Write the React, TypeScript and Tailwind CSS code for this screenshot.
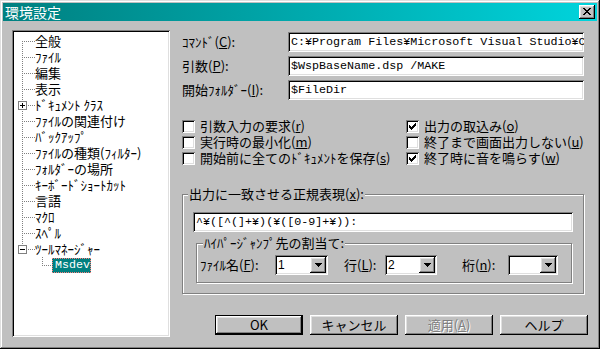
import React from 'react';

// Win98 bevels
const sunken =
  'shadow-[inset_1px_1px_0_#808080,inset_-1px_-1px_0_#ffffff,inset_2px_2px_0_#000000,inset_-2px_-2px_0_#dfdfdf]';
const raised =
  'shadow-[inset_-1px_-1px_0_#000000,inset_1px_1px_0_#ffffff,inset_-2px_-2px_0_#808080,inset_2px_2px_0_#dfdfdf]';
const etched = 'border border-[#808080] shadow-[inset_1px_1px_0_#ffffff,1px_1px_0_#ffffff]';

type Pos = 'first' | 'mid' | 'last';

const treeItems: { label: string; pos: Pos; box?: '+' | '-' }[] = [
  { label: '全般', pos: 'first' },
  { label: 'ﾌｧｲﾙ', pos: 'mid' },
  { label: '編集', pos: 'mid' },
  { label: '表示', pos: 'mid' },
  { label: 'ﾄﾞｷｭﾒﾝﾄ ｸﾗｽ', pos: 'mid', box: '+' },
  { label: 'ﾌｧｲﾙの関連付け', pos: 'mid' },
  { label: 'ﾊﾞｯｸｱｯﾌﾟ', pos: 'mid' },
  { label: 'ﾌｧｲﾙの種類(ﾌｨﾙﾀｰ)', pos: 'mid' },
  { label: 'ﾌｫﾙﾀﾞｰの場所', pos: 'mid' },
  { label: 'ｷｰﾎﾞｰﾄﾞｼｮｰﾄｶｯﾄ', pos: 'mid' },
  { label: '言語', pos: 'mid' },
  { label: 'ﾏｸﾛ', pos: 'mid' },
  { label: 'ｽﾍﾟﾙ', pos: 'mid' },
  { label: 'ﾂｰﾙﾏﾈｰｼﾞｬｰ', pos: 'last', box: '-' },
];

const dotsV = (x: number, y0: number, y1: number, skip?: [number, number]) => {
  const r = [];
  for (let y = y0; y < y1; y += 2) {
    if (skip && y >= skip[0] && y <= skip[1]) continue;
    r.push(<rect key={`v${x}-${y}`} x={x} y={y} width={1} height={1} />);
  }
  return r;
};

const dotsH = (y: number, x0: number, x1: number) => {
  const r = [];
  for (let x = x0; x < x1; x += 2) r.push(<rect key={`h${y}-${x}`} x={x} y={y} width={1} height={1} />);
  return r;
};

const Gutter = ({ pos, box }: { pos: Pos; box?: '+' | '-' }) => {
  const skip: [number, number] | undefined = box ? [4, 12] : undefined;
  const v = pos === 'first' ? dotsV(8, 8, 16, skip) : pos === 'last' ? dotsV(8, 0, 9, skip) : dotsV(8, 0, 16, skip);
  return (
    <svg width="21" height="16" className="shrink-0" shapeRendering="crispEdges">
      <g fill="#808080">
        {v}
        {dotsH(8, box ? 14 : 10, 21)}
      </g>
      {box && (
        <>
          <rect x="4.5" y="4.5" width="8" height="8" fill="#ffffff" stroke="#808080" />
          <rect x="6" y="8" width="5" height="1" fill="#000000" />
          {box === '+' && <rect x="8" y="6" width="1" height="5" fill="#000000" />}
        </>
      )}
    </svg>
  );
};

// mnemonic underline, kept to the line box
const U = ({ children }: { children: React.ReactNode }) => (
  <u className="inline-block leading-[14px]">{children}</u>
);

const Field = ({ value, className = '' }: { value: string; className?: string }) => (
  <div
    className={`${sunken} bg-white h-[20px] flex items-center pl-[3px] pr-[2px] overflow-hidden whitespace-nowrap font-['Liberation_Mono',monospace] text-[11.7px] leading-[16px] ${className}`}
  >
    <span className="shrink-0">{value}</span>
  </div>
);

const CheckBox = ({ checked }: { checked?: boolean }) => (
  <div className={`w-[13px] h-[13px] shrink-0 bg-white ${sunken} flex items-center justify-center`}>
    {checked && (
      <svg width="7" height="7" viewBox="0 0 7 7" shapeRendering="crispEdges">
        <path
          d="M0 2h1v3H0z M1 3h1v3H1z M2 4h1v3H2z M3 3h1v3H3z M4 2h1v3H4z M5 1h1v3H5z M6 0h1v3H6z"
          fill="#000000"
        />
      </svg>
    )}
  </div>
);

const CheckRow = ({ checked, children }: { checked?: boolean; children: React.ReactNode }) => (
  <div className="h-[16px] flex items-center gap-[5px] whitespace-nowrap">
    <CheckBox checked={checked} />
    <span className="leading-[16px]">{children}</span>
  </div>
);

const Combo = ({ value, className = '' }: { value: string; className?: string }) => (
  <div className={`${sunken} bg-white h-[20px] flex items-center p-[2px] ${className}`}>
    <span className="flex-1 pl-[1px] leading-[16px] font-['Liberation_Sans',sans-serif] text-[12px]">{value}</span>
    <div className={`w-[16px] h-[16px] bg-[#c0c0c0] ${raised} flex items-center justify-center`}>
      <svg width="7" height="4" viewBox="0 0 7 4" shapeRendering="crispEdges">
        <path d="M0 0h7v1H0z M1 1h5v1H1z M2 2h3v1H2z M3 3h1v1H3z" fill="#000000" />
      </svg>
    </div>
  </div>
);

const Button = ({ children, primary, disabled }: { children: React.ReactNode; primary?: boolean; disabled?: boolean }) => (
  <div
    className={`w-[88px] h-[20px] bg-[#c0c0c0] ${raised} flex items-center justify-center leading-[16px] ${
      primary ? 'border border-black' : ''
    } ${disabled ? 'text-[#808080] [text-shadow:1px_1px_0_#ffffff]' : ''}`}
  >
    {children}
  </div>
);

export default function App() {
  return (
    <div className="w-[600px] h-[349px] bg-[#c0c0c0] p-[3px] overflow-hidden text-black text-[13px] font-['Noto_Sans_CJK_JP','Noto_Sans',sans-serif] shadow-[inset_-1px_-1px_0_#000000,inset_1px_1px_0_#dfdfdf,inset_-2px_-2px_0_#808080,inset_2px_2px_0_#ffffff]">
      {/* title bar */}
      <div className="h-[18px] flex items-center justify-between pl-[2px] pr-[2px] bg-linear-to-r from-[#008080] to-[#00d4dc]">
        <span className="text-white text-[14px] leading-[18px]">環境設定</span>
        <div className={`w-[16px] h-[14px] bg-[#c0c0c0] ${raised} flex items-center justify-center pb-[1px]`}>
          <svg width="8" height="7" viewBox="0 0 8 7" shapeRendering="crispEdges">
            <path
              d="M0 0h2v1H0z M6 0h2v1H6z M1 1h2v1H1z M5 1h2v1H5z M2 2h4v1H2z M3 3h2v1H3z M2 4h4v1H2z M1 5h2v1H1z M5 5h2v1H5z M0 6h2v1H0z M6 6h2v1H6z"
              fill="#000000"
            />
          </svg>
        </div>
      </div>

      <div className="flex h-[325px]">
        {/* tree */}
        <div className={`ml-[9px] mt-[9px] w-[158px] h-[307px] bg-white ${sunken} pt-[3px] pl-[2px]`}>
          {treeItems.map((item) => (
            <div key={item.label} className="h-[16px] flex items-center whitespace-nowrap">
              <Gutter pos={item.pos} box={item.box} />
              <span className="leading-[16px]">{item.label}</span>
            </div>
          ))}
          <div className="h-[16px] flex items-center">
            <svg width="38" height="16" className="shrink-0" shapeRendering="crispEdges">
              <g fill="#808080">
                {dotsV(28, 0, 9)}
                {dotsH(8, 30, 38)}
              </g>
            </svg>
            <span className="h-[15px] w-[39px] bg-[#008080] text-white border border-dotted border-[#ff7f7f] leading-[13px] pl-[2px] font-['Liberation_Mono',monospace] text-[11.7px] overflow-hidden whitespace-nowrap">
              Msdev
            </span>
          </div>
        </div>

        {/* right side */}
        <div className="ml-[12px] flex flex-col">
          <div className="mt-[11px] flex flex-col gap-[4px]">
            <div className="h-[20px] flex items-center">
              <span className="w-[106px] leading-[20px]">
                ｺﾏﾝﾄﾞ(<U>C</U>):
              </span>
              <Field className="w-[296px]" value="C:¥Program Files¥Microsoft Visual Studio¥Common¥MSDev98¥Bin¥MSDEV.EXE" />
            </div>
            <div className="h-[20px] flex items-center">
              <span className="w-[106px] leading-[20px]">
                引数(<U>P</U>):
              </span>
              <Field className="w-[296px]" value="$WspBaseName.dsp /MAKE" />
            </div>
            <div className="h-[20px] flex items-center">
              <span className="w-[106px] leading-[20px]">
                開始ﾌｫﾙﾀﾞｰ(<U>I</U>):
              </span>
              <Field className="w-[296px]" value="$FileDir" />
            </div>
          </div>

          <div className="mt-[18px] flex">
            <div className="w-[224px] flex flex-col">
              <CheckRow>
                引数入力の要求(<U>r</U>)
              </CheckRow>
              <CheckRow>
                実行時の最小化(<U>m</U>)
              </CheckRow>
              <CheckRow>
                開始前に全てのﾄﾞｷｭﾒﾝﾄを保存(<U>s</U>)
              </CheckRow>
            </div>
            <div className="flex flex-col">
              <CheckRow checked>
                出力の取込み(<U>o</U>)
              </CheckRow>
              <CheckRow>
                終了まで画面出力しない(<U>u</U>)
              </CheckRow>
              <CheckRow checked>
                終了時に音を鳴らす(<U>w</U>)
              </CheckRow>
            </div>
          </div>

          <div className={`mt-[28px] w-[402px] h-[100px] ${etched} flex flex-col`}>
            <div className="-mt-[8px] ml-[5px] px-[1px] w-fit bg-[#c0c0c0] leading-[14px]">
              出力に一致させる正規表現(<U>x</U>):
            </div>
            <Field className="mt-[11px] ml-[10px] w-[380px]" value="^¥([^(]+¥)(¥([0-9]+¥)):" />
            <div className={`mt-[11px] ml-[13px] w-[376px] h-[40px] ${etched} flex flex-col`}>
              <div className="-mt-[8px] ml-[6px] px-[1px] w-fit bg-[#c0c0c0] leading-[14px]">ﾊｲﾊﾟｰｼﾞｬﾝﾌﾟ先の割当て:</div>
              <div className="mt-[5px] ml-[3px] h-[20px] flex items-center whitespace-nowrap">
                <span className="w-[75px] leading-[16px]">
                  ﾌｧｲﾙ名(<U>F</U>):
                </span>
                <Combo className="w-[53px]" value="1" />
                <span className="ml-[16px] w-[41px] leading-[16px]">
                  行(<U>L</U>):
                </span>
                <Combo className="w-[52px]" value="2" />
                <span className="ml-[25px] w-[46px] leading-[16px]">
                  桁(<U>n</U>):
                </span>
                <Combo className="w-[50px]" value="" />
              </div>
            </div>
          </div>

          <div className="mt-[21px] pl-[33px] flex gap-[7px]">
            <Button primary>OK</Button>
            <Button>キャンセル</Button>
            <Button disabled>
              適用(<U>A</U>)
            </Button>
            <Button>ヘルプ</Button>
          </div>
        </div>
      </div>
    </div>
  );
}
